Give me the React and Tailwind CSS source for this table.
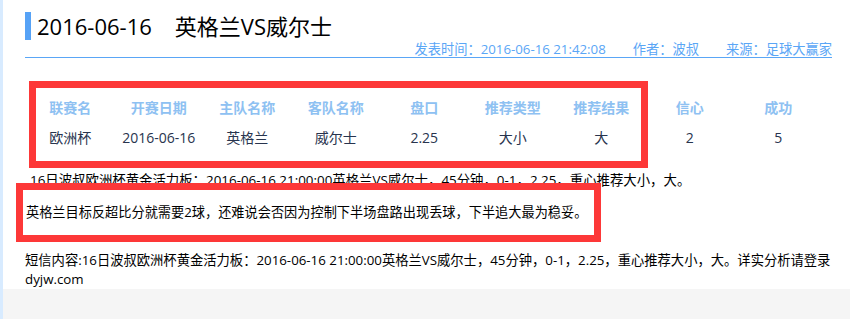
import React from "react";

const columns = ["联赛名", "开赛日期", "主队名称", "客队名称", "盘口", "推荐类型", "推荐结果", "信心", "成功"];
const row = ["欧洲杯", "2016-06-16", "英格兰", "威尔士", "2.25", "大小", "大", "2", "5"];

const font = { fontFamily: '"Open Sans", "Noto Sans CJK SC", sans-serif' };

const App = () => {
  return (
    <div className="flex h-[319px] w-[850px] bg-white overflow-hidden" style={font}>
      <div className="w-[3px] bg-[#d8ebff]" />
      <div className="flex-1 flex flex-col">
        <div className="relative flex-1 pl-[22px] pr-[16px]">
          <div className="mt-[12px] flex h-[28px] items-center border-l-[6px] border-[#56a2f6] pl-[6px] text-[22px] leading-[28px] text-black">
            <span>2016-06-16</span>
            <span className="ml-[23px]">英格兰VS威尔士</span>
          </div>
          <div className="mt-[1px] mr-[2px] flex h-[17px] justify-end gap-[27px] border-b border-[#5aa6f6] text-[13.25px] leading-[16px] text-[#5aa6f6]">
            <span>发表时间：2016-06-16 21:42:08</span>
            <span>作者：波叔</span>
            <span>来源：足球大赢家</span>
          </div>

          <div className="mt-[36px] ml-[1px] grid grid-cols-[repeat(9,88.5px)] text-center text-[14px]">
            {columns.map((c) => (
              <div key={c} className="h-[28px] leading-[28px] font-bold text-[#8ec1f2]">
                {c}
              </div>
            ))}
            {row.map((v, i) => (
              <div key={"v" + i} className="h-[32px] leading-[32px] text-[#28344e]">
                {v}
              </div>
            ))}
          </div>

          <p className="mt-[16px] ml-[5px] text-[13.4px] leading-[20px] text-black whitespace-nowrap">
            16日波叔欧洲杯黄金活力板：2016-06-16 21:00:00英格兰VS威尔士，45分钟，0-1，2.25，重心推荐大小，大。
          </p>
          <p className="mt-[12px] ml-[1px] text-[13.2px] leading-[20px] text-black">
            英格兰目标反超比分就需要2球，还难说会否因为控制下半场盘路出现丢球，下半追大最为稳妥。
          </p>
          <p className="mt-[29px] text-[13.3px] leading-[19px] text-black">
            短信内容:16日波叔欧洲杯黄金活力板：2016-06-16 21:00:00英格兰VS威尔士，45分钟，0-1，2.25，重心推荐大小，大。详实分析请登录dyjw.com
          </p>

          <div className="absolute left-[26px] top-[81px] h-[87px] w-[619px] border-[7px] border-[#fd3838]" />
          <div className="absolute left-[13px] top-[183px] h-[59px] w-[585px] border-[7px] border-[#fd3838]" />
        </div>
        <div className="h-[30px] bg-[#f5f5f5]" />
      </div>
    </div>
  );
};

export default App;
